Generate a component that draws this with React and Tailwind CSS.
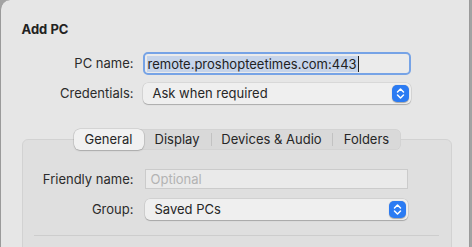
import React from 'react';

function UpDown() {
  return (
    <span className="flex h-[17px] w-[17px] items-center justify-center rounded-[5px] bg-[#2b7bf3] shadow-[0_0.5px_1px_rgba(0,0,0,0.3)]">
      <svg width="11" height="13" viewBox="0 0 11 13" fill="none">
        <path d="M2.5 5 L5.5 2 L8.5 5" stroke="white" strokeWidth="1.5" strokeLinecap="round" strokeLinejoin="round" />
        <path d="M2.5 8 L5.5 11 L8.5 8" stroke="white" strokeWidth="1.5" strokeLinecap="round" strokeLinejoin="round" />
      </svg>
    </span>
  );
}

function Select({ value, className = '' }) {
  return (
    <div
      className={`flex h-[21px] items-center justify-between rounded-[5px] bg-[#efefef] pl-[10px] pr-[2px] shadow-[0_0_0_0.5px_rgba(0,0,0,0.12),0_1px_1px_rgba(0,0,0,0.2)] ${className}`}
    >
      <span className="text-[13px] leading-none text-[#262626]">{value}</span>
      <UpDown />
    </div>
  );
}

function Label({ children }) {
  return <div className="text-right text-[13px] leading-none text-[#2b2b2b]">{children}</div>;
}

const tabs = ['General', 'Display', 'Devices & Audio', 'Folders'];

export default function App() {
  return (
    <div className="h-[247px] w-[472px] overflow-hidden bg-[#a3a3a3] font-['Inter','Liberation_Sans',sans-serif]">
      <div className="h-[247px] w-[470px] overflow-hidden rounded-tl-[10px] border-l-[1.5px] border-r border-[#9a9a9a] bg-[#e6e6e6]">
        <div className="pl-[20.5px] pt-[21px] text-[13px] font-bold leading-[16px] text-[#222]">Add PC</div>

        <div className="mt-[15px] grid grid-cols-[112px_268px] items-center gap-x-[9px] gap-y-[8px] pl-[20.5px]">
          <Label>PC name:</Label>
          <div className="flex h-[23px] items-center rounded-[5px] border-[2.5px] border-[#76a3e6] bg-[#ebebeb] pl-[2px]">
            <span className="bg-[#c6d4ea] px-[1px] text-[13px] leading-[16px] text-[#222]">remote.proshopteetimes.com:443</span>
            <span className="h-[16px] w-px bg-[#222]" />
          </div>
          <Label>Credentials:</Label>
          <Select value="Ask when required" />
        </div>

        <div className="ml-[20.5px] mt-[35px] h-[120px] w-[430px] rounded-[6px] border border-[#d2d2d2] bg-[#dfdfdf]">
          <div className="-mt-[11px] ml-[51px] flex h-[21px] w-[327px] items-center rounded-[6px] bg-[#d9d9d9] text-[13px] leading-none text-[#262626] shadow-[inset_0_0_0_0.5px_rgba(0,0,0,0.06)]">
            {tabs.map((t, i) => (
              <React.Fragment key={t}>
                {i > 1 && <span className="h-[13px] w-px bg-[#c2c2c2]" />}
                <div
                  className={
                    i === 0
                      ? 'flex h-[21px] w-[70px] items-center justify-center rounded-[6px] bg-[#f1f1f1] shadow-[0_0_0_0.5px_rgba(0,0,0,0.15),0_1px_1.5px_rgba(0,0,0,0.18)]'
                      : i === 1
                        ? 'flex h-[21px] w-[67px] items-center justify-center'
                        : i === 2
                          ? 'flex h-[21px] w-[120px] items-center justify-center'
                          : 'flex h-[21px] flex-1 items-center justify-center'
                  }
                >
                  {t}
                </div>
              </React.Fragment>
            ))}
          </div>

          <div className="mt-[19px] grid grid-cols-[111px_263px] items-center gap-x-[11px] gap-y-[10px]">
            <Label>Friendly name:</Label>
            <div className="flex h-[20px] items-center border border-[#cbcbcb] bg-[#eaeaea] pl-[5px] text-[13px] leading-none text-[#b3b3b3]">
              Optional
            </div>
            <Label>Group:</Label>
            <Select value="Saved PCs" />
          </div>

          <div className="ml-[11px] mt-[15px] h-px w-[405px] bg-[#cdcdcd]" />
        </div>
      </div>
    </div>
  );
}
